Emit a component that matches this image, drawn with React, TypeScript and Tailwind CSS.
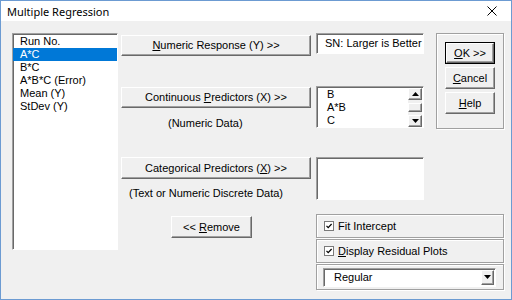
import React from 'react';

const raised =
  'border border-t-white border-l-white border-r-[#696969] border-b-[#696969] shadow-[inset_-1px_-1px_0_#a0a0a0] bg-[#f0f0f0]';
const sunken =
  'border border-t-[#a0a0a0] border-l-[#a0a0a0] border-r-white border-b-white shadow-[inset_1px_1px_0_#696969] bg-white';
const etched = 'border border-[#a0a0a0] shadow-[inset_1px_1px_0_#fff,1px_1px_0_#fff]';

const Arrow = ({ down }: { down?: boolean }) => (
  <svg width="7" height="4" viewBox="0 0 7 4">
    <path d={down ? 'M0 0 H7 L3.5 4 Z' : 'M0 4 H7 L3.5 0 Z'} fill="#000" />
  </svg>
);

const Check = () => (
  <span className="w-[10px] h-[10px] border border-[#7a7a7a] bg-white flex items-center justify-center">
    <svg width="8" height="8" viewBox="0 0 8 8">
      <path d="M1.5 3.8 L3.2 5.6 L6.6 2" stroke="#000" strokeWidth="1.2" fill="none" />
    </svg>
  </span>
);

const Btn = ({ children, className = '' }: { children: React.ReactNode; className?: string }) => (
  <div className={`${raised} flex items-center justify-center ${className}`}>{children}</div>
);

const U = ({ children }: { children: React.ReactNode }) => <span className="underline underline-offset-1">{children}</span>;

const App: React.FC = () => {
  const items = ['Run No.', 'A*C', 'B*C', 'A*B*C (Error)', 'Mean (Y)', 'StDev (Y)'];

  return (
    <div className="w-[512px] h-[300px] border border-[#6c9bd2] flex flex-col font-['Liberation_Sans',Arial,sans-serif] text-[11px] leading-[13px] text-black">
      {/* title bar */}
      <div className="h-[20px] bg-white flex items-center justify-between pl-[6px] pr-[14px]">
        <span className="font-['Noto_Sans',sans-serif] text-[11px]">Multiple Regression</span>
        <svg width="10" height="10" viewBox="0 0 10 10">
          <path d="M0.5 0.5 L9.5 9.5 M9.5 0.5 L0.5 9.5" stroke="#000" strokeWidth="1" />
        </svg>
      </div>

      {/* body */}
      <div className="flex-1 bg-[#f0f0f0] flex pl-[11px] pt-[12px]">
        {/* variables list */}
        <div className={`${sunken} w-[106px] h-[217px] pt-[1px]`}>
          {items.map((it, i) => (
            <div
              key={it}
              className={`h-[13px] pl-[7px] ${i === 1 ? 'bg-[#0078d7] text-white' : ''}`}
            >
              {it}
            </div>
          ))}
        </div>

        <div className="ml-[3px] flex flex-col">
          <div className="flex">
            <div className="flex flex-col">
              {/* row 1 */}
              <div className="flex">
                <Btn className="w-[190px] h-[21px] mt-[2px]">
                  <span>
                    <U>N</U>umeric Response (Y) &gt;&gt;
                  </span>
                </Btn>
                <div className={`${sunken} ml-[5px] w-[108px] h-[21px] pl-[8px] flex items-center`}>
                  SN: Larger is Better
                </div>
              </div>

              {/* row 2 */}
              <div className="flex mt-[30px]">
                <div className="w-[190px] flex flex-col">
                  <Btn className="h-[21px] mt-[1px]">
                    <span>
                      Continuous <U>P</U>redictors (X) &gt;&gt;
                    </span>
                  </Btn>
                  <div className="mt-[9px] pl-[47px]">(Numeric Data)</div>
                </div>
                <div className={`${sunken} ml-[5px] w-[108px] h-[42px] flex`}>
                  <div className="flex-1 pl-[10px] pt-[1px]">
                    <div className="h-[13px]">B</div>
                    <div className="h-[13px]">A*B</div>
                    <div className="h-[13px]">C</div>
                  </div>
                  <div className="w-[14px] mr-[1px] mt-[1px] flex flex-col bg-[#f0f0f0]">
                    <Btn className="h-[12px]">
                      <Arrow />
                    </Btn>
                    <div className="flex-1 flex items-center">
                      <div className={`${raised} w-full h-[9px]`} />
                    </div>
                    <Btn className="h-[12px]">
                      <Arrow down />
                    </Btn>
                  </div>
                </div>
              </div>

              {/* row 3 */}
              <div className="flex mt-[27px]">
                <div className="w-[190px] flex flex-col">
                  <Btn className="h-[22px]">
                    <span>
                      Categorical Predictors (<U>X</U>) &gt;&gt;
                    </span>
                  </Btn>
                  <div className="mt-[8px] pl-[8px]">(Text or Numeric Discrete Data)</div>
                </div>
                <div className={`${sunken} ml-[5px] w-[108px] h-[43px]`} />
              </div>
            </div>

            {/* action buttons */}
            <div className={`${etched} ml-[12px] w-[68px] h-[96px] px-[8px] pt-[8px] flex flex-col gap-[3px] self-start`}>
              <div className="border border-black">
                <Btn className="h-[20px]">
                  <span>
                    <U>O</U>K &gt;&gt;
                  </span>
                </Btn>
              </div>
              <Btn className="h-[22px]">
                <span>
                  <U>C</U>ancel
                </span>
              </Btn>
              <Btn className="h-[22px]">
                <span>
                  <U>H</U>elp
                </span>
              </Btn>
            </div>
          </div>

          {/* bottom section */}
          <div className="flex mt-[14px]">
            <div className="w-[190px] pl-[50px] pt-[2px]">
              <Btn className="w-[81px] h-[22px]">
                <span>
                  &lt;&lt; <U>R</U>emove
                </span>
              </Btn>
            </div>
            <div className="ml-[5px] w-[188px] flex flex-col gap-[1px]">
              <div className={`${etched} h-[24px] pl-[7px] flex items-center gap-[4px]`}>
                <Check />
                <span>Fit Intercept</span>
              </div>
              <div className={`${etched} h-[24px] pl-[7px] flex items-center gap-[4px]`}>
                <Check />
                <span>
                  <U>D</U>isplay Residual Plots
                </span>
              </div>
              <div className={`${etched} h-[26px] pl-[6px] pr-[7px] flex items-center`}>
                <div className={`${sunken} flex-1 h-[19px] flex items-center`}>
                  <span className="flex-1 pl-[10px]">Regular</span>
                  <Btn className="w-[13px] h-[15px] mr-[1px]">
                    <Arrow down />
                  </Btn>
                </div>
              </div>
            </div>
          </div>
        </div>
      </div>
    </div>
  );
};

export default App;
